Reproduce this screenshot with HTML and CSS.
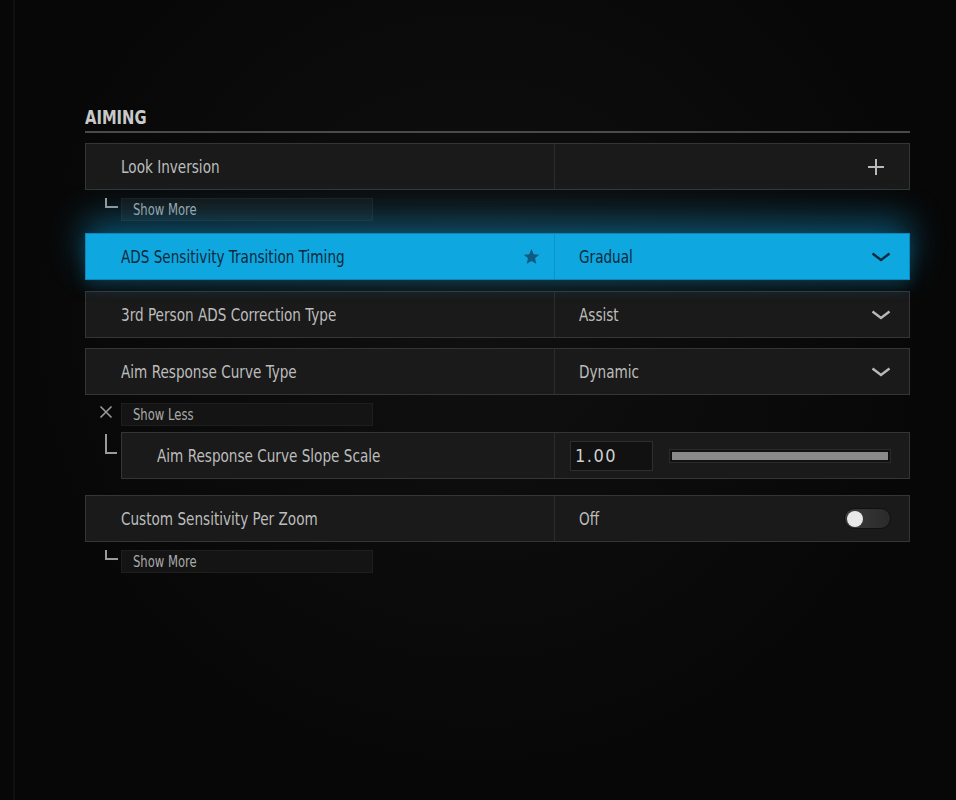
FILE: index.html
```html
<!DOCTYPE html>
<html lang="en">
<head>
<meta charset="utf-8">
<title>Aiming Settings</title>
<link rel="stylesheet" href="styles.css">
</head>
<body>
<div class="screen">
  <section class="section">
    <h2 class="section-title"><span class="t">AIMING</span></h2>

    <div class="row">
      <div class="row-label"><span class="t">Look Inversion</span></div>
      <div class="row-value">
        <span class="t"></span>
        <svg class="icon-plus" width="18" height="18" viewBox="0 0 18 18"><path d="M9 1v16M1 9h16" stroke="#b8b8b8" stroke-width="2" fill="none"/></svg>
      </div>
    </div>
    <div class="more">
      <span class="bracket-small"></span>
      <div class="more-box"><span class="t">Show More</span></div>
    </div>

    <div class="row row-active gap-after-more">
      <div class="row-label"><span class="t">ADS Sensitivity Transition Timing</span>
        <svg class="icon-star" width="17" height="17" viewBox="0 0 24 24"><path d="M12 1.5l3.1 7.2 7.8.7-5.9 5.2 1.8 7.7L12 18.2l-6.8 4.1 1.8-7.7-5.9-5.2 7.8-.7z" fill="#0e5a82"/></svg>
      </div>
      <div class="row-value">
        <span class="t">Gradual</span>
        <svg class="icon-chevron" width="20" height="10" viewBox="0 0 20 10"><path d="M1.5 1.5L10 8l8.5-6.5" stroke="#0d2a3c" stroke-width="2.4" fill="none"/></svg>
      </div>
    </div>

    <div class="row gap-active">
      <div class="row-label"><span class="t">3rd Person ADS Correction Type</span></div>
      <div class="row-value">
        <span class="t">Assist</span>
        <svg class="icon-chevron" width="20" height="10" viewBox="0 0 20 10"><path d="M1.5 1.5L10 8l8.5-6.5" stroke="#b8b8b8" stroke-width="2.4" fill="none"/></svg>
      </div>
    </div>

    <div class="row gap-row">
      <div class="row-label"><span class="t">Aim Response Curve Type</span></div>
      <div class="row-value">
        <span class="t">Dynamic</span>
        <svg class="icon-chevron" width="20" height="10" viewBox="0 0 20 10"><path d="M1.5 1.5L10 8l8.5-6.5" stroke="#b8b8b8" stroke-width="2.4" fill="none"/></svg>
      </div>
    </div>
    <div class="more">
      <svg class="icon-x" width="14" height="14" viewBox="0 0 14 14"><path d="M1.5 1.5l11 11M12.5 1.5l-11 11" stroke="#9a9a9a" stroke-width="1.6" fill="none"/></svg>
      <div class="more-box"><span class="t">Show Less</span></div>
    </div>

    <div class="sub">
      <span class="bracket-tall"></span>
      <div class="row sub-row">
        <div class="row-label sub-label"><span class="t">Aim Response Curve Slope Scale</span></div>
        <div class="row-value slider-value">
          <div class="num-input">1.00</div>
          <div class="slider"><div class="slider-fill"></div></div>
        </div>
      </div>
    </div>

    <div class="row gap-sub">
      <div class="row-label"><span class="t">Custom Sensitivity Per Zoom</span></div>
      <div class="row-value">
        <span class="t">Off</span>
        <div class="toggle"><div class="knob"></div></div>
      </div>
    </div>
    <div class="more">
      <span class="bracket-small"></span>
      <div class="more-box"><span class="t">Show More</span></div>
    </div>
  </section>
</div>
</body>
</html>
```
FILE: styles.css
```css
* { box-sizing: border-box; }
html, body {
  margin: 0;
  padding: 0;
  height: 100%;
}
body {
  background: #080808;
  font-family: "DejaVu Sans Condensed", "Liberation Sans", sans-serif;
  color: #c0c0c0;
}
.screen {
  min-height: 800px;
  padding: 104px 46px 0 85px;
  background:
    linear-gradient(90deg, transparent 13px, rgba(255,255,255,0.035) 13px, rgba(255,255,255,0.035) 15px, transparent 15px),
    radial-gradient(ellipse at 50% 40%, #101010 0%, #070707 70%);
}
.section {
  width: 825px;
  display: flex;
  flex-direction: column;
}
.t {
  display: inline-block;
  transform: scaleX(0.84);
  transform-origin: left center;
  white-space: nowrap;
}
.section-title {
  margin: 0;
  font-weight: 700;
  font-size: 20px;
  line-height: 26px;
  color: #c9c9c9;
  padding-bottom: 1px;
  border-bottom: 2px solid #4a4a4a;
  margin-bottom: 10px;
}
.section-title .t { transform: scaleX(0.82); }
.row {
  height: 47px;
  display: flex;
  background: #1a1a1a;
  border: 1px solid #353535;
}
.row-label {
  width: 469px;
  flex: none;
  display: flex;
  align-items: center;
  justify-content: space-between;
  padding-left: 35px;
  padding-right: 14px;
  font-size: 18px;
  color: #bdbdbd;
  border-right: 1px solid #2c2c2c;
}
.row-value {
  flex: 1;
  display: flex;
  align-items: center;
  justify-content: space-between;
  padding-left: 24px;
  padding-right: 18px;
  font-size: 18px;
  color: #bdbdbd;
}
.icon-plus { margin-right: 6px; }
.row-active {
  background: #0fa7df;
  border-color: #0b86b8;
  box-shadow: 0 -14px 34px rgba(16,160,220,0.45), 0 6px 16px rgba(16,160,220,0.22);
  position: relative;
  z-index: 1;
}
.row-active .row-label,
.row-active .row-value {
  color: #0d2a3c;
  border-right-color: rgba(0,60,100,0.18);
}
.gap-after-more { margin-top: 12px; }
.gap-active { margin-top: 11px; }
.gap-row { margin-top: 10px; }
.gap-sub { margin-top: 16px; }

.more {
  margin-top: 8px;
  height: 23px;
  display: flex;
  align-items: center;
}
.bracket-small {
  width: 13px;
  height: 10px;
  margin-left: 20px;
  margin-right: 3px;
  align-self: flex-start;
  border-left: 2px solid #9a9a9a;
  border-bottom: 2px solid #9a9a9a;
}
.icon-x {
  margin-left: 14px;
  margin-right: 8px;
  align-self: flex-start;
  margin-top: 2px;
}
.more-box {
  width: 252px;
  height: 23px;
  background: #141414;
  border: 1px solid #1e1e1e;
  padding-left: 11px;
  display: flex;
  align-items: center;
  font-size: 15px;
  color: #a9a9a9;
}
.more-box .t { transform: scaleX(0.86); }

.sub {
  margin-top: 6px;
  display: flex;
}
.bracket-tall {
  width: 12px;
  height: 20px;
  margin-left: 20px;
  margin-right: 4px;
  margin-top: 2px;
  border-left: 2px solid #9a9a9a;
  border-bottom: 2px solid #9a9a9a;
}
.sub-row { flex: 1; }
.sub-label { width: 433px; }
.slider-value {
  padding-left: 15px;
  padding-right: 18px;
}
.num-input {
  width: 83px;
  height: 30px;
  background: #111;
  border: 1px solid #2e2e2e;
  display: flex;
  align-items: center;
  padding-left: 4px;
  font-size: 18px;
  letter-spacing: 1.5px;
  color: #d0d0d0;
}
.slider {
  width: 222px;
  height: 14px;
  background: #111;
  border: 1px solid #2b2b2b;
  padding: 2px;
}
.slider-fill {
  width: 100%;
  height: 100%;
  background: #8a8a8a;
}
.toggle {
  width: 47px;
  height: 21px;
  border-radius: 11px;
  background: linear-gradient(90deg, #3a3a3a, #2a2a2a);
  border: 1px solid #101010;
  display: flex;
  align-items: center;
  padding-left: 2px;
}
.knob {
  width: 16px;
  height: 16px;
  border-radius: 50%;
  background: #e8e8e8;
}
```
